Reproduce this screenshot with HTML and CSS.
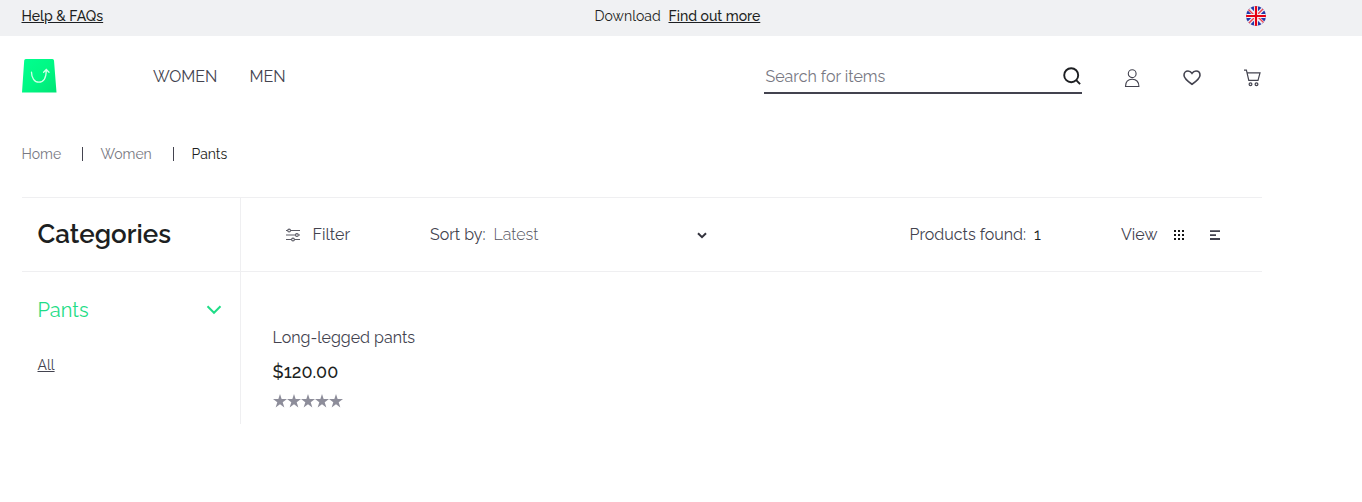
FILE: index.html
```html
<!DOCTYPE html>
<html lang="en">
<head>
<meta charset="utf-8">
<title>Pants</title>
<link rel="stylesheet" href="styles.css">
</head>
<body>
<div class="topbar">
  <a class="help" href="#">Help &amp; FAQs</a>
  <span class="download">Download</span>
  <a class="more" href="#">Find out more</a>
  <svg class="flag" width="20" height="20" viewBox="0 0 20 20">
    <defs><clipPath id="round"><circle cx="10" cy="10" r="10"/></clipPath></defs>
    <g clip-path="url(#round)">
      <path fill="#2438a8" d="M0 0h20v20H0z"/>
      <path stroke="#e8eaf4" stroke-width="4" d="M0 0l20 20M20 0L0 20"/>
      <path stroke="#ee4450" stroke-width="1.4" d="M0 1l9 9M11 10l9 9M20 0l-9 9M9 11l-9 9"/>
      <path stroke="#f3f4f8" stroke-width="4" d="M10 0v20M0 10h20"/>
      <path stroke="#e60012" stroke-width="2.2" d="M10 0v20M0 10h20"/>
    </g>
  </svg>
</div>
<header class="header">
  <svg class="logo" width="35" height="35" viewBox="0 0 35 35">
    <defs><linearGradient id="bag" x1="0" y1="0" x2="1" y2="1"><stop offset="0" stop-color="#00ff90"/><stop offset=".5" stop-color="#00f884"/><stop offset="1" stop-color="#00e475"/></linearGradient></defs>
    <path fill="url(#bag)" d="M3.800 1h26.600q1.500 0 1.600 1.500L34.500 34.500H0L2.200 2.500Q2.300 1 3.800 1z"/>
    <path fill="none" stroke="#d2ffe8" stroke-width="1.300" stroke-linecap="round" d="M9.500 14.200c0 5.500 3 10 7.400 10 4.500 0 7.300-4.500 7.400-12.200M21.600 14.200l2.700-2.700 2.700 2.700"/>
  </svg>
  <nav class="nav"><a class="women" href="#">WOMEN</a><a class="men" href="#">MEN</a></nav>
  <div class="search">
    <span class="placeholder">Search for items</span>
    <svg width="20" height="20" viewBox="0 0 20 20" fill="none" stroke="#1d1f22" stroke-width="1.900"><circle cx="9.200" cy="9.200" r="7"/><path d="M14.200 14.200l3.900 3.900"/></svg>
  </div>
  <svg class="user" width="16" height="18" viewBox="0 0 16 18" fill="none" stroke="#43434f" stroke-width="1.100"><circle cx="8.200" cy="4.700" r="3.900"/><path d="M1.500 17.500c0-4.600 2.700-7.200 6.700-7.200s6.700 2.600 6.700 7.200z"/></svg>
  <svg class="heart" width="18" height="16" viewBox="0 0 18 16" fill="none" stroke="#43434f" stroke-width="1.600"><path d="M9 3.300C7.700 1.500 6.500 1 5 1 2.600 1 1 2.800 1 5.200 1 8.600 4.800 11.300 9 14.300c4.200-3 8-5.700 8-9.100C17 2.800 15.400 1 13 1c-1.500 0-2.700.5-4 2.300z"/></svg>
  <svg class="cart" width="18" height="18" viewBox="0 0 18 18" fill="none" stroke="#43434f" stroke-width="1.200"><path d="M0 1.100h2.400l2.400 10.300h9.200l2-7.600H3.300"/><circle cx="6.500" cy="15.200" r="1.400"/><circle cx="12.500" cy="15.200" r="1.400"/></svg>
</header>
<div class="crumbs">
  <a class="home" href="#">Home</a><span class="bar"></span><a class="crumb-women" href="#">Women</a><span class="bar"></span><span class="current">Pants</span>
</div>
<main class="catalog">
  <h1 class="title"><span>Categories</span></h1>
  <div class="toolbar">
    <svg class="sliders" width="14" height="14" viewBox="0 0 14 14" fill="none" stroke="#5a5a64" stroke-width="1.100"><path d="M0 2.500h1.600M4.700 2.500H14M0 7h9.300M12.400 7H14M0 11.500h5.400M8.500 11.500H14"/><circle cx="3.100" cy="2.500" r="1.400"/><circle cx="10.900" cy="7" r="1.400"/><circle cx="7" cy="11.500" r="1.400"/></svg>
    <span class="filter">Filter</span>
    <span class="sort">Sort by:</span>
    <span class="latest">Latest</span>
    <svg class="caret" width="10" height="7" viewBox="0 0 10 7" fill="none" stroke="#33333d" stroke-width="2"><path d="M1 1.200l4 4 4-4"/></svg>
    <span class="found">Products found:</span>
    <span class="count">1</span>
    <span class="view">View</span>
    <svg class="grid-icon" width="10" height="10" viewBox="0 0 10 10" fill="#151515"><path d="M0 0h2v2H0zM4 0h2v2H4zM8 0h2v2H8zM0 4h2v2H0zM4 4h2v2H4zM8 4h2v2H8zM0 8h2v2H0zM4 8h2v2H4zM8 8h2v2H8z"/></svg>
    <svg class="list-icon" width="10" height="10" viewBox="0 0 10 10" fill="#43434f"><path d="M0 .2h10v1.800H0zM0 4.200h6v1.700H0zM0 8.100h10v1.800H0z"/></svg>
  </div>
  <aside class="sidebar">
    <div class="group"><span class="group-name">Pants</span><svg width="16" height="10" viewBox="0 0 16 10" fill="none" stroke="#1fdd87" stroke-width="2"><path d="M1.500 1.300L8 7.800l6.500-6.500"/></svg></div>
    <a class="all" href="#">All</a>
  </aside>
  <section class="product">
    <span class="name">Long-legged pants</span>
    <span class="price">$120.00</span>
    <div class="stars">
      <svg width="70" height="14" viewBox="0 0 70 14" fill="#8d8d9a"><defs><path id="star" d="M7 0l1.650 5H14l-4.300 3.200 1.650 5.300L7 10.200l-4.350 3.300L4.300 8.200 0 5h5.350z"/></defs><use href="#star"/><use href="#star" x="14"/><use href="#star" x="28"/><use href="#star" x="42"/><use href="#star" x="56"/></svg>
    </div>
  </section>
</main>
</body>
</html>
```
FILE: styles.css
```css
* { box-sizing: border-box; }
body { margin: 0; background: #fff; color: #43434f; font: 400 16px/24px Raleway, Lato, sans-serif; }
a { color: inherit; text-decoration: none; }
svg { display: block; flex: none; }
span, a { white-space: nowrap; flex: none; }

.topbar { display: flex; align-items: flex-start; height: 36px; padding: 4px 0 0 21.5px; background: #f0f1f3; color: #1d1f22; font-size: 14px; }
.help, .more { font-weight: 500; text-decoration: underline; }
.help { width: 573px; }
.download { width: 74px; }
.more { width: 577.5px; }
.flag { margin-top: 2px; }

.header { display: flex; height: 82px; padding-left: 21.5px; }
.logo { margin-top: 22px; }
.nav { display: flex; width: 707.5px; padding: 29px 0 0 96.5px; }
.women { width: 96.5px; }
.search { display: flex; justify-content: space-between; width: 318px; height: 34px; margin: 24px 42px 0 0; padding: 5px 0 0 1.5px; border-bottom: 2px solid #43434f; color: #787882; }
.search svg { margin-top: 1px; }
.user { margin-top: 33px; }
.heart { margin: 34px 43px 0 43px; }
.cart { margin-top: 33px; }

.crumbs { display: flex; align-items: flex-start; padding: 24px 0 0 21.5px; height: 79px; color: #787882; font-size: 14px; }
.home { width: 60.5px; }
.crumb-women { width: 72.5px; }
.bar { width: 1px; height: 14px; margin: 5px 17.5px 0 0; background: #43434f; }
.current { color: #1d1f22; }

.catalog { display: grid; grid-template-columns: 219px 1021px; grid-template-rows: 75px 152px; width: 1240px; margin-left: 21.5px; }
.title, .toolbar { margin: 0; border-top: 1px solid #efeff1; border-bottom: 1px solid #efeff1; }
.title, .sidebar { border-right: 1px solid #efeff1; padding-left: 16px; }
.title { padding-top: 16px; color: #1d1f22; font-size: 26px; line-height: 40px; font-weight: 600; }
.toolbar { display: flex; align-items: flex-start; padding: 25px 0 0 45px; }
.sliders { margin: 5px 13px 0 0; }
.filter { width: 117.5px; }
.sort { width: 63.5px; }
.latest { width: 203.5px; color: #55555f; font-weight: 300; }
.caret { margin: 9px 202.5px 0 0; }
.found { width: 124.5px; }
.count { width: 87px; color: #1d1f22; }
.view { width: 53px; }
.grid-icon { margin: 7px 26px 0 0; }
.list-icon { margin-top: 7px; }
.sidebar { padding-top: 22px; }
.group { display: flex; justify-content: space-between; padding-right: 18px; height: 32px; color: #1fdd87; font-size: 20px; line-height: 32px; }
.group svg { margin-top: 11px; }
.all { display: inline-block; margin-top: 27px; font-size: 14px; text-decoration: underline; }
.product { display: flex; flex-direction: column; align-items: flex-start; padding: 54px 0 0 32px; }
.price { margin-top: 10px; color: #1d1f22; font-size: 18px; font-weight: 500; }
.stars { margin-top: 10px; }
```
